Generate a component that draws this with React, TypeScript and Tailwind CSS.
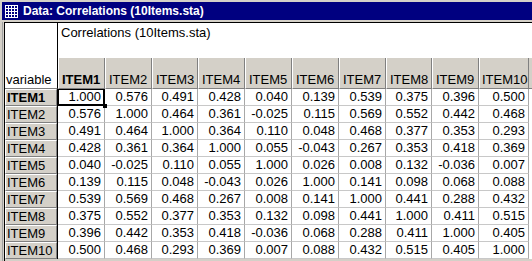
import React from "react";

const cols = [47, 47, 46, 47, 47, 47, 47, 46, 47, 50];
const names = ["ITEM1", "ITEM2", "ITEM3", "ITEM4", "ITEM5", "ITEM6", "ITEM7", "ITEM8", "ITEM9", "ITEM10"];
const data: string[][] = [
  ["1.000", "0.576", "0.491", "0.428", "0.040", "0.139", "0.539", "0.375", "0.396", "0.500"],
  ["0.576", "1.000", "0.464", "0.361", "-0.025", "0.115", "0.569", "0.552", "0.442", "0.468"],
  ["0.491", "0.464", "1.000", "0.364", "0.110", "0.048", "0.468", "0.377", "0.353", "0.293"],
  ["0.428", "0.361", "0.364", "1.000", "0.055", "-0.043", "0.267", "0.353", "0.418", "0.369"],
  ["0.040", "-0.025", "0.110", "0.055", "1.000", "0.026", "0.008", "0.132", "-0.036", "0.007"],
  ["0.139", "0.115", "0.048", "-0.043", "0.026", "1.000", "0.141", "0.098", "0.068", "0.088"],
  ["0.539", "0.569", "0.468", "0.267", "0.008", "0.141", "1.000", "0.441", "0.288", "0.432"],
  ["0.375", "0.552", "0.377", "0.353", "0.132", "0.098", "0.441", "1.000", "0.411", "0.515"],
  ["0.396", "0.442", "0.353", "0.418", "-0.036", "0.068", "0.288", "0.411", "1.000", "0.405"],
  ["0.500", "0.468", "0.293", "0.369", "0.007", "0.088", "0.432", "0.515", "0.405", "1.000"],
];

function GridIcon() {
  const cells: React.ReactNode[] = [];
  const xs = [1, 4, 7, 10];
  const ys = [1, 4, 7, 10];
  ys.forEach((y, r) =>
    xs.forEach((x, c) => {
      cells.push(<rect key={`${r}-${c}`} x={x} y={y} width={2} height={2} fill="#000080" />);
    })
  );
  return (
    <svg width="13" height="13" viewBox="0 0 13 13">
      <rect x="0" y="0" width="13" height="13" fill="#ffffff" />
      {cells}
    </svg>
  );
}

export default function App() {
  return (
    <div className="w-[532px] h-[261px] bg-[#d4d0c8] overflow-hidden font-['Liberation_Sans',Arial,sans-serif] text-[13px] text-black">
      <div className="h-[2px]" />
      <div className="ml-[2px] h-[18px] bg-[#000080] flex items-center">
        <div className="ml-[3px] flex">
          <GridIcon />
        </div>
        <span className="ml-[5px] text-white font-bold text-[12px] leading-[14px]">
          Data: Correlations (10Items.sta)
        </span>
      </div>
      <div className="h-[2px]" />
      <div className="flex h-[239px]">
        <div className="w-[2px]" />
        <div className="w-[1px] bg-[#a0a0a0]" />
        <div className="w-[1px]" />
        <div className="flex-1 border-l border-t border-black bg-white flex flex-col">
          <div className="flex">
            <div className="w-[53px] h-[66px] border-r border-black border-b border-b-[#808080] flex items-end pl-[1px] pb-[1px] leading-[15px]">
              variable
            </div>
            <div className="flex flex-col">
              <div className="h-[35px] pl-[3px] pt-[2px] leading-[15px] whitespace-nowrap">
                Correlations (10Items.sta)
              </div>
              <div className="flex h-[31px]">
                {names.map((n, i) => (
                  <div
                    key={n}
                    style={{ width: cols[i] }}
                    className={`bg-[#d4d0c8] border-l border-white border-r border-r-[#808080] border-b border-b-[#808080] flex items-end pb-[1px] leading-[15px] whitespace-nowrap overflow-hidden ${i === 9 ? "pl-[2px]" : "pl-[3px]"} ${i === 0 ? "font-bold" : ""}`}
                  >
                    {n}
                  </div>
                ))}
              </div>
            </div>
            <div className="flex-1 flex flex-col">
              <div className="h-[35px]" />
              <div className="h-[31px] bg-[#d4d0c8] border-b border-[#808080]" />
            </div>
          </div>
          {data.map((row, r) => (
            <div key={r} className="flex h-[17px]">
              <div className="w-[53px] border-r border-black flex">
                <div
                  className={`flex-1 bg-[#d4d0c8] border-t border-l border-white border-b border-b-[#808080] border-r border-r-[#808080] pl-[1px] leading-[15px] ${r === 0 ? "font-bold" : ""}`}
                >
                  {names[r]}
                </div>
              </div>
              {row.map((v, c) => (
                <div
                  key={c}
                  style={{ width: cols[c] }}
                  className="relative border-r border-r-[#a8a8a8] border-b border-b-[#c8c8c8] text-right pr-[3px] leading-[16px]"
                >
                  {v}
                  {r === 0 && c === 0 && (
                    <>
                      <div className="absolute left-[0px] top-[0px] right-[-1px] bottom-[-1px] border border-black border-r-2 border-b-2" />
                      <div className="absolute right-[-3px] bottom-[-3px] w-[4px] h-[4px] bg-black z-10" />
                    </>
                  )}
                </div>
              ))}
              <div className="flex-1 bg-white" />
            </div>
          ))}
          <div className="flex-1 bg-[#d4d0c8]" />
        </div>
      </div>
    </div>
  );
}
